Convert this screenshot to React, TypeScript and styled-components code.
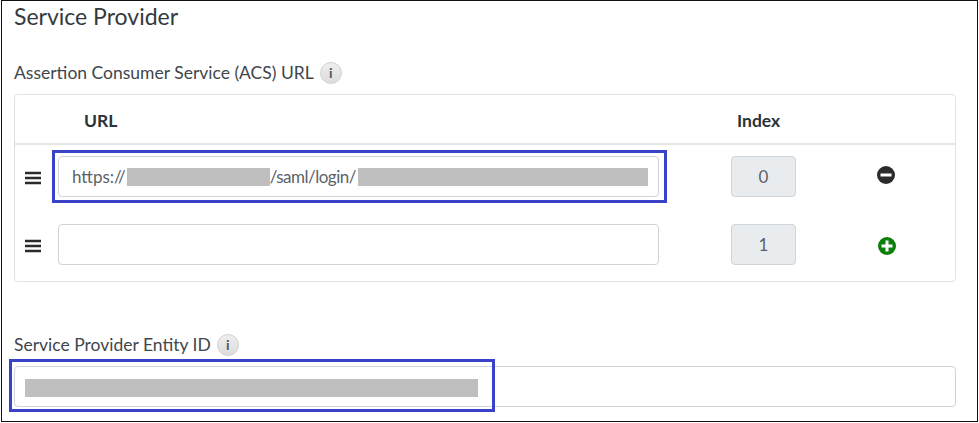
import React from "react";
import styled, { createGlobalStyle } from "styled-components";

const Global = createGlobalStyle`
  html, body { margin: 0; padding: 0; background: #fff; }
  body { font-family: Lato, "Noto Sans", sans-serif; color: #495057; }
`;

const Frame = styled.div`
  box-sizing: border-box;
  width: 977px;
  height: 422px;
  margin-left: 1px;
  border: 1px solid #111;
  padding: 0 21px 0 12px;
  overflow: hidden;
`;
const Title = styled.h2`
  margin: 0;
  height: 31px;
  font-size: 23px;
  line-height: 31px;
  font-weight: 400;
  color: #343a40;
`;
const FieldLabel = styled.div<{ $top: number }>`
  display: flex;
  align-items: center;
  gap: 6px;
  height: 24px;
  margin-top: ${(p) => p.$top}px;
  font-size: 17.5px;
  color: #40464c;
`;
const InfoBadge = styled.span`
  box-sizing: border-box;
  width: 22px;
  height: 22px;
  margin-top: 1px;
  border-radius: 50%;
  background: linear-gradient(#eeeeee, #dcdcdc);
  border: 1px solid #d2d2d2;
  display: flex;
  align-items: center;
  justify-content: center;
  font-size: 14px;
  font-weight: 700;
  color: #555;
`;
const Panel = styled.div`
  box-sizing: border-box;
  height: 188px;
  margin-top: 10px;
  border: 1px solid #dee2e6;
  border-radius: 4px;
`;
const HeaderRow = styled.div`
  display: grid;
  grid-template-columns: 43px 601px 1fr;
  height: 46px;
  padding-top: 2px;
  align-items: center;
  border-bottom: 2px solid #e4e6e9;
  font-size: 17.5px;
  font-weight: 700;
  color: #2b3238;
`;
const UrlHead = styled.span`
  grid-column: 2;
  padding-left: 26px;
`;
const IndexHead = styled.span`
  grid-column: 3;
  padding-left: 78px;
  white-space: nowrap;
`;
const Row = styled.div<{ $top: number }>`
  display: grid;
  grid-template-columns: 43px 601px 72px 65px 1fr;
  height: 41px;
  margin-top: ${(p) => p.$top}px;
  align-items: center;
`;
const Handle = styled.div`
  display: flex;
  justify-content: center;
  padding-right: 8px;
  padding-top: 3px;
  color: #2a2a2a;
`;
const Highlighted = styled.div`
  position: relative;
  &::after {
    content: "";
    position: absolute;
    pointer-events: none;
    border: 3px solid #3a42c8;
    box-sizing: border-box;
  }
`;
const UrlHighlight = styled(Highlighted)`
  &::after {
    left: -6px;
    top: -6px;
    width: 615px;
    height: 53px;
  }
`;
const EntityHighlight = styled(Highlighted)`
  margin-top: 10px;
  &::after {
    left: -5px;
    top: -7px;
    width: 486px;
    height: 53px;
  }
`;
const TextBox = styled.div`
  box-sizing: border-box;
  height: 41px;
  border: 1px solid #ced4da;
  border-radius: 4px;
  background: #fff;
  display: flex;
  align-items: center;
  padding-left: 13px;
  font-size: 17px;
  color: #5b6269;
  white-space: nowrap;
`;
const PathText = styled.span`
  letter-spacing: -0.5px;
`;
const Redaction = styled.span<{ $w: number; $gap?: number; $drop?: number }>`
  display: inline-block;
  width: ${(p) => p.$w}px;
  height: 18px;
  margin-left: ${(p) => p.$gap ?? 0}px;
  margin-top: ${(p) => p.$drop ?? 0}px;
  background: #bfbfbf;
`;
const IndexBox = styled.div`
  box-sizing: border-box;
  width: 65px;
  height: 41px;
  grid-column: 3 / 5;
  margin-left: 72px;
  border: 1px solid #ced4da;
  border-radius: 4px;
  background: #e9ecef;
  display: flex;
  align-items: center;
  justify-content: center;
  font-size: 17px;
  color: #5b6269;
`;
const ActionCell = styled.div<{ $shift: number; $lift: number }>`
  display: flex;
  justify-content: flex-end;
  padding-right: ${(p) => 60 - p.$shift}px;
  margin-top: ${(p) => p.$lift}px;
`;
const EntityBox = styled(TextBox)`
  padding-left: 10px;
`;

const Bars = () => (
  <svg width="16" height="14" viewBox="0 0 16 14" aria-hidden="true">
    <path d="M0 2h16M0 7h16M0 12h16" stroke="currentColor" strokeWidth="2.6" />
  </svg>
);
const RoundIcon = ({ color, plus }: { color: string; plus?: boolean }) => (
  <svg width="18" height="18" viewBox="0 0 18 18" aria-hidden="true">
    <circle cx="9" cy="9" r="9" fill={color} />
    <path d={plus ? "M3.5 9h11M9 3.5v11" : "M3.5 9h11"} stroke="#fff" strokeWidth="3" />
  </svg>
);

export default function App() {
  return (
    <>
      <Global />
      <Frame>
        <Title>Service Provider</Title>
        <FieldLabel $top={28}>
          Assertion Consumer Service (ACS) URL <InfoBadge>i</InfoBadge>
        </FieldLabel>
        <Panel>
          <HeaderRow>
            <UrlHead>URL</UrlHead>
            <IndexHead>Index</IndexHead>
          </HeaderRow>
          <Row $top={11}>
            <Handle><Bars /></Handle>
            <UrlHighlight>
              <TextBox>
                https://<Redaction $w={143} $gap={1} /><PathText>/saml/login/</PathText><Redaction $w={290} $gap={2} />
              </TextBox>
            </UrlHighlight>
            <IndexBox>0</IndexBox>
            <ActionCell $shift={0} $lift={-3}><RoundIcon color="#2b2b2b" /></ActionCell>
          </Row>
          <Row $top={27}>
            <Handle><Bars /></Handle>
            <TextBox />
            <IndexBox>1</IndexBox>
            <ActionCell $shift={1} $lift={3}><RoundIcon color="#0a800a" plus /></ActionCell>
          </Row>
        </Panel>
        <FieldLabel $top={50}>
          Service Provider Entity ID <InfoBadge>i</InfoBadge>
        </FieldLabel>
        <EntityHighlight>
          <EntityBox><Redaction $w={453} $drop={2} /></EntityBox>
        </EntityHighlight>
      </Frame>
    </>
  );
}
